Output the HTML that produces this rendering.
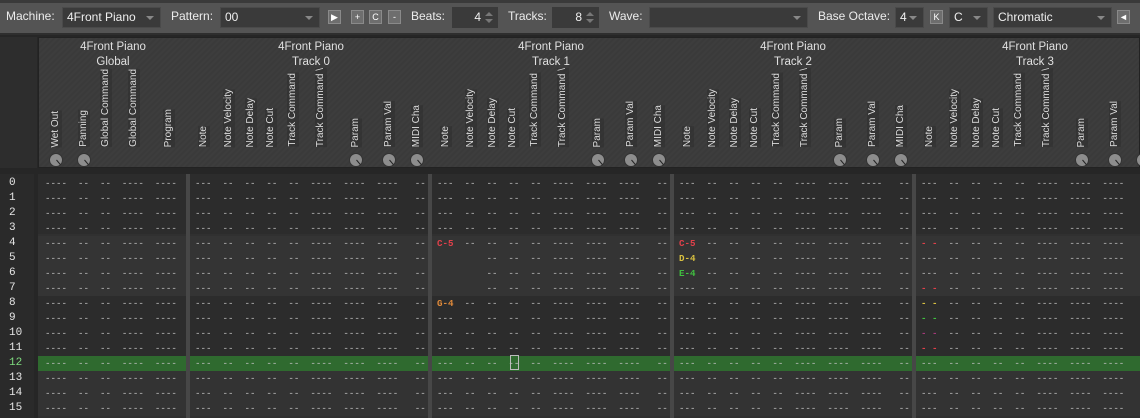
<!DOCTYPE html>
<html><head><meta charset="utf-8"><style>
*{margin:0;padding:0;box-sizing:border-box}
body{width:1140px;height:418px;overflow:hidden;background:#262626;font-family:"Liberation Sans",sans-serif;position:relative}
.tb{position:absolute;left:0;top:0;width:1140px;height:35px;background:#545454;border-top:3px solid #3a3a3a;border-bottom:2px solid #2e2e2e}
.lbl{position:absolute;top:9px;font-size:12px;color:#ececec}
.sel{position:absolute;top:7px;height:21px;background:#3a3a3a;border:1px solid #4a4a4a;color:#f0f0f0;font-size:12px;line-height:19px;padding-left:4px}
.sel:after{content:"";position:absolute;right:6px;top:8px;border-left:4px solid transparent;border-right:4px solid transparent;border-top:4px solid #888}
.btn{position:absolute;top:10px;width:13px;height:14px;background:#6e6e6e;border:1px solid #8a8a8a;color:#fff;font-size:9px;line-height:12px;text-align:center}
.spin{position:absolute;top:7px;height:21px;background:#3a3a3a;color:#f0f0f0;font-size:12px;line-height:21px;text-align:right}
.spin i{position:absolute;right:5px;width:0;border-left:4px solid transparent;border-right:4px solid transparent}
.hdr{position:absolute;left:38px;top:37px;width:1102px;height:131px;background:#3b3b3b;border:1px solid #222;
background-image:repeating-linear-gradient(135deg,rgba(255,255,255,.012) 0 2px,rgba(0,0,0,.015) 2px 4px)}
.lcol{position:absolute;left:0;top:37px;width:37px;height:131px;background:#2d2d2d}
.t{position:absolute;font-size:11.5px;color:#e0e0e0;text-align:center;width:200px}
.v{position:absolute;bottom:20px;font-size:10px;color:#dcdcdc;writing-mode:vertical-rl;transform:rotate(180deg);white-space:nowrap;width:12px;background:rgba(40,40,40,.35)}
.k{position:absolute;top:115px;width:14px;height:14px;border-radius:50%;background:#8d8d8d;border:1px solid #333}
.k:after{content:"";position:absolute;left:6px;top:6px;width:1px;height:6px;background:#222;transform:rotate(-40deg);transform-origin:top}
.nums{position:absolute;left:0;top:174px;width:34px;height:244px;background:#2a2a2a}
.nums pre{font-family:"Liberation Mono",monospace;font-size:11px;line-height:15px;color:#e6e6e6;padding-left:9px;padding-top:2px}
.grid{position:absolute;left:38px;top:174px;width:1102px;height:244px;background:#303030}
.band{position:absolute;left:0;width:1102px;height:60px}
.sep{position:absolute;top:0;width:4px;height:244px;background:#474747}
.g{position:absolute;top:2px;font-family:"Liberation Mono",monospace;font-size:9.17px;line-height:15px;color:#c4c4c4;white-space:pre}
.r{color:#e0404a;font-weight:bold}.o{color:#e08a3a;font-weight:bold}.y{color:#d8c040;font-weight:bold}.gr{color:#40c040;font-weight:bold}
</style></head><body>
<div class="tb"></div>
<div class="lbl" style="left:6px">Machine:</div>
<div class="sel" style="left:62px;width:99px">4Front Piano</div>
<div class="lbl" style="left:171px">Pattern:</div>
<div class="sel" style="left:220px;width:100px">00</div>
<div class="btn" style="left:328px">&#9654;</div>
<div class="btn" style="left:351px">+</div>
<div class="btn" style="left:369px">C</div>
<div class="btn" style="left:388px">-</div>
<div class="lbl" style="left:411px">Beats:</div>
<div class="spin" style="left:452px;width:46px;padding-right:17px">4<i style="top:5px;border-bottom:4px solid #777"></i><i style="top:12px;border-top:4px solid #777"></i></div>
<div class="lbl" style="left:508px">Tracks:</div>
<div class="spin" style="left:552px;width:47px;padding-right:17px">8<i style="top:5px;border-bottom:4px solid #777"></i><i style="top:12px;border-top:4px solid #777"></i></div>
<div class="lbl" style="left:609px">Wave:</div>
<div class="sel" style="left:649px;width:159px"></div>
<div class="lbl" style="left:818px">Base Octave:</div>
<div class="sel" style="left:895px;width:29px">4</div>
<div class="btn" style="left:930px">K</div>
<div class="sel" style="left:949px;width:39px">C</div>
<div class="sel" style="left:993px;width:119px">Chromatic</div>
<div class="btn" style="left:1117px">&#9668;</div>

<div class="lcol"></div>
<div class="hdr">
<div class="t" style="left:-26px;top:3px">4Front Piano</div><div class="t" style="left:-26px;top:18px">Global</div>
<div class="t" style="left:172px;top:3px">4Front Piano</div><div class="t" style="left:172px;top:18px">Track 0</div>
<div class="t" style="left:412px;top:3px">4Front Piano</div><div class="t" style="left:412px;top:18px">Track 1</div>
<div class="t" style="left:654px;top:3px">4Front Piano</div><div class="t" style="left:654px;top:18px">Track 2</div>
<div class="t" style="left:896px;top:3px">4Front Piano</div><div class="t" style="left:896px;top:18px">Track 3</div>

<div class="v" style="left:11px">Wet Out</div><div class="k" style="left:10px"></div>
<div class="v" style="left:39px">Panning</div><div class="k" style="left:38px"></div>
<div class="v" style="left:61px">Global Command</div>
<div class="v" style="left:89px">Global Command</div>
<div class="v" style="left:124px">Program</div>

<div class="v" style="left:159px">Note</div><div class="v" style="left:184px">Note Velocity</div><div class="v" style="left:206px">Note Delay</div><div class="v" style="left:226px">Note Cut</div><div class="v" style="left:248px">Track Command</div><div class="v" style="left:276px">Track Command \</div><div class="v" style="left:311px">Param</div><div class="k" style="left:310px"></div><div class="v" style="left:344px">Param Val</div><div class="k" style="left:343px"></div><div class="v" style="left:372px">MIDI Cha</div><div class="k" style="left:371px"></div>

<div class="v" style="left:401px">Note</div><div class="v" style="left:426px">Note Velocity</div><div class="v" style="left:448px">Note Delay</div><div class="v" style="left:468px">Note Cut</div><div class="v" style="left:490px">Track Command</div><div class="v" style="left:518px">Track Command \</div><div class="v" style="left:553px">Param</div><div class="k" style="left:552px"></div><div class="v" style="left:586px">Param Val</div><div class="k" style="left:585px"></div><div class="v" style="left:614px">MIDI Cha</div><div class="k" style="left:613px"></div>

<div class="v" style="left:643px">Note</div><div class="v" style="left:668px">Note Velocity</div><div class="v" style="left:690px">Note Delay</div><div class="v" style="left:710px">Note Cut</div><div class="v" style="left:732px">Track Command</div><div class="v" style="left:760px">Track Command \</div><div class="v" style="left:795px">Param</div><div class="k" style="left:794px"></div><div class="v" style="left:828px">Param Val</div><div class="k" style="left:827px"></div><div class="v" style="left:856px">MIDI Cha</div><div class="k" style="left:855px"></div>

<div class="v" style="left:885px">Note</div><div class="v" style="left:910px">Note Velocity</div><div class="v" style="left:932px">Note Delay</div><div class="v" style="left:952px">Note Cut</div><div class="v" style="left:974px">Track Command</div><div class="v" style="left:1002px">Track Command \</div><div class="v" style="left:1037px">Param</div><div class="k" style="left:1036px"></div><div class="v" style="left:1070px">Param Val</div><div class="k" style="left:1069px"></div><div class="k" style="left:1097px"></div>
</div>

<div class="nums"><pre>0
1
2
3
4
5
6
7
8
9
10
11
<span style="color:#7fdc7f">12</span>
13
14
15</pre></div>

<div class="grid">
<div class="band" style="top:0;background:#2c2c2c"></div>
<div class="band" style="top:62px;background:#343434"></div>
<div class="band" style="top:122px;background:#2c2c2c"></div>
<div class="band" style="top:182px;background:#333"></div>
<div style="position:absolute;left:0;top:182px;width:1102px;height:15px;background:#2f6a2f"></div>
<div class="sep" style="left:148px"></div>
<div class="sep" style="left:390px"></div>
<div class="sep" style="left:632px"></div>
<div class="sep" style="left:874px"></div>
<div style="position:absolute;left:472px;top:181px;width:9px;height:15px;border:1px solid #bbb"></div>

<div class="g" style="left:7px">----  --  --  ----  ----
----  --  --  ----  ----
----  --  --  ----  ----
----  --  --  ----  ----
----  --  --  ----  ----
----  --  --  ----  ----
----  --  --  ----  ----
----  --  --  ----  ----
----  --  --  ----  ----
----  --  --  ----  ----
----  --  --  ----  ----
----  --  --  ----  ----
----  --  --  ----  ----
----  --  --  ----  ----
----  --  --  ----  ----
----  --  --  ----  ----</div>

<div class="g" style="left:157px">---  --  --  --  --  ----  ----  ----   --
---  --  --  --  --  ----  ----  ----   --
---  --  --  --  --  ----  ----  ----   --
---  --  --  --  --  ----  ----  ----   --
---  --  --  --  --  ----  ----  ----   --
---  --  --  --  --  ----  ----  ----   --
---  --  --  --  --  ----  ----  ----   --
---  --  --  --  --  ----  ----  ----   --
---  --  --  --  --  ----  ----  ----   --
---  --  --  --  --  ----  ----  ----   --
---  --  --  --  --  ----  ----  ----   --
---  --  --  --  --  ----  ----  ----   --
---  --  --  --  --  ----  ----  ----   --
---  --  --  --  --  ----  ----  ----   --
---  --  --  --  --  ----  ----  ----   --
---  --  --  --  --  ----  ----  ----   --</div>

<div class="g" style="left:399px">---  --  --  --  --  ----  ----  ----   --
---  --  --  --  --  ----  ----  ----   --
---  --  --  --  --  ----  ----  ----   --
---  --  --  --  --  ----  ----  ----   --
<span class="r">C-5</span>  --  --  --  --  ----  ----  ----   --
         --  --  --  ----  ----  ----   --
         --  --  --  ----  ----  ----   --
         --  --  --  ----  ----  ----   --
<span class="o">G-4</span>  --  --  --  --  ----  ----  ----   --
---  --  --  --  --  ----  ----  ----   --
---  --  --  --  --  ----  ----  ----   --
---  --  --  --  --  ----  ----  ----   --
---  --  --  --  --  ----  ----  ----   --
---  --  --  --  --  ----  ----  ----   --
---  --  --  --  --  ----  ----  ----   --
---  --  --  --  --  ----  ----  ----   --</div>

<div class="g" style="left:641px">---  --  --  --  --  ----  ----  ----   --
---  --  --  --  --  ----  ----  ----   --
---  --  --  --  --  ----  ----  ----   --
---  --  --  --  --  ----  ----  ----   --
<span class="r">C-5</span>  --  --  --  --  ----  ----  ----   --
<span class="y">D-4</span>  --  --  --  --  ----  ----  ----   --
<span class="gr">E-4</span>  --  --  --  --  ----  ----  ----   --
---  --  --  --  --  ----  ----  ----   --
---  --  --  --  --  ----  ----  ----   --
---  --  --  --  --  ----  ----  ----   --
---  --  --  --  --  ----  ----  ----   --
---  --  --  --  --  ----  ----  ----   --
---  --  --  --  --  ----  ----  ----   --
---  --  --  --  --  ----  ----  ----   --
---  --  --  --  --  ----  ----  ----   --
---  --  --  --  --  ----  ----  ----   --</div>

<div class="g" style="left:883px">---  --  --  --  --  ----  ----  ----   --
---  --  --  --  --  ----  ----  ----   --
---  --  --  --  --  ----  ----  ----   --
---  --  --  --  --  ----  ----  ----   --
<span class="r">- -</span>  --  --  --  --  ----  ----  ----   --
---  --  --  --  --  ----  ----  ----   --
---  --  --  --  --  ----  ----  ----   --
<span class="r">- -</span>  --  --  --  --  ----  ----  ----   --
<span class="y">- -</span>  --  --  --  --  ----  ----  ----   --
<span class="gr">- -</span>  --  --  --  --  ----  ----  ----   --
<span style="color:#e040a0">- -</span>  --  --  --  --  ----  ----  ----   --
<span class="r">- -</span>  --  --  --  --  ----  ----  ----   --
---  --  --  --  --  ----  ----  ----   --
---  --  --  --  --  ----  ----  ----   --
---  --  --  --  --  ----  ----  ----   --
---  --  --  --  --  ----  ----  ----   --</div>
</div>
</body></html>
